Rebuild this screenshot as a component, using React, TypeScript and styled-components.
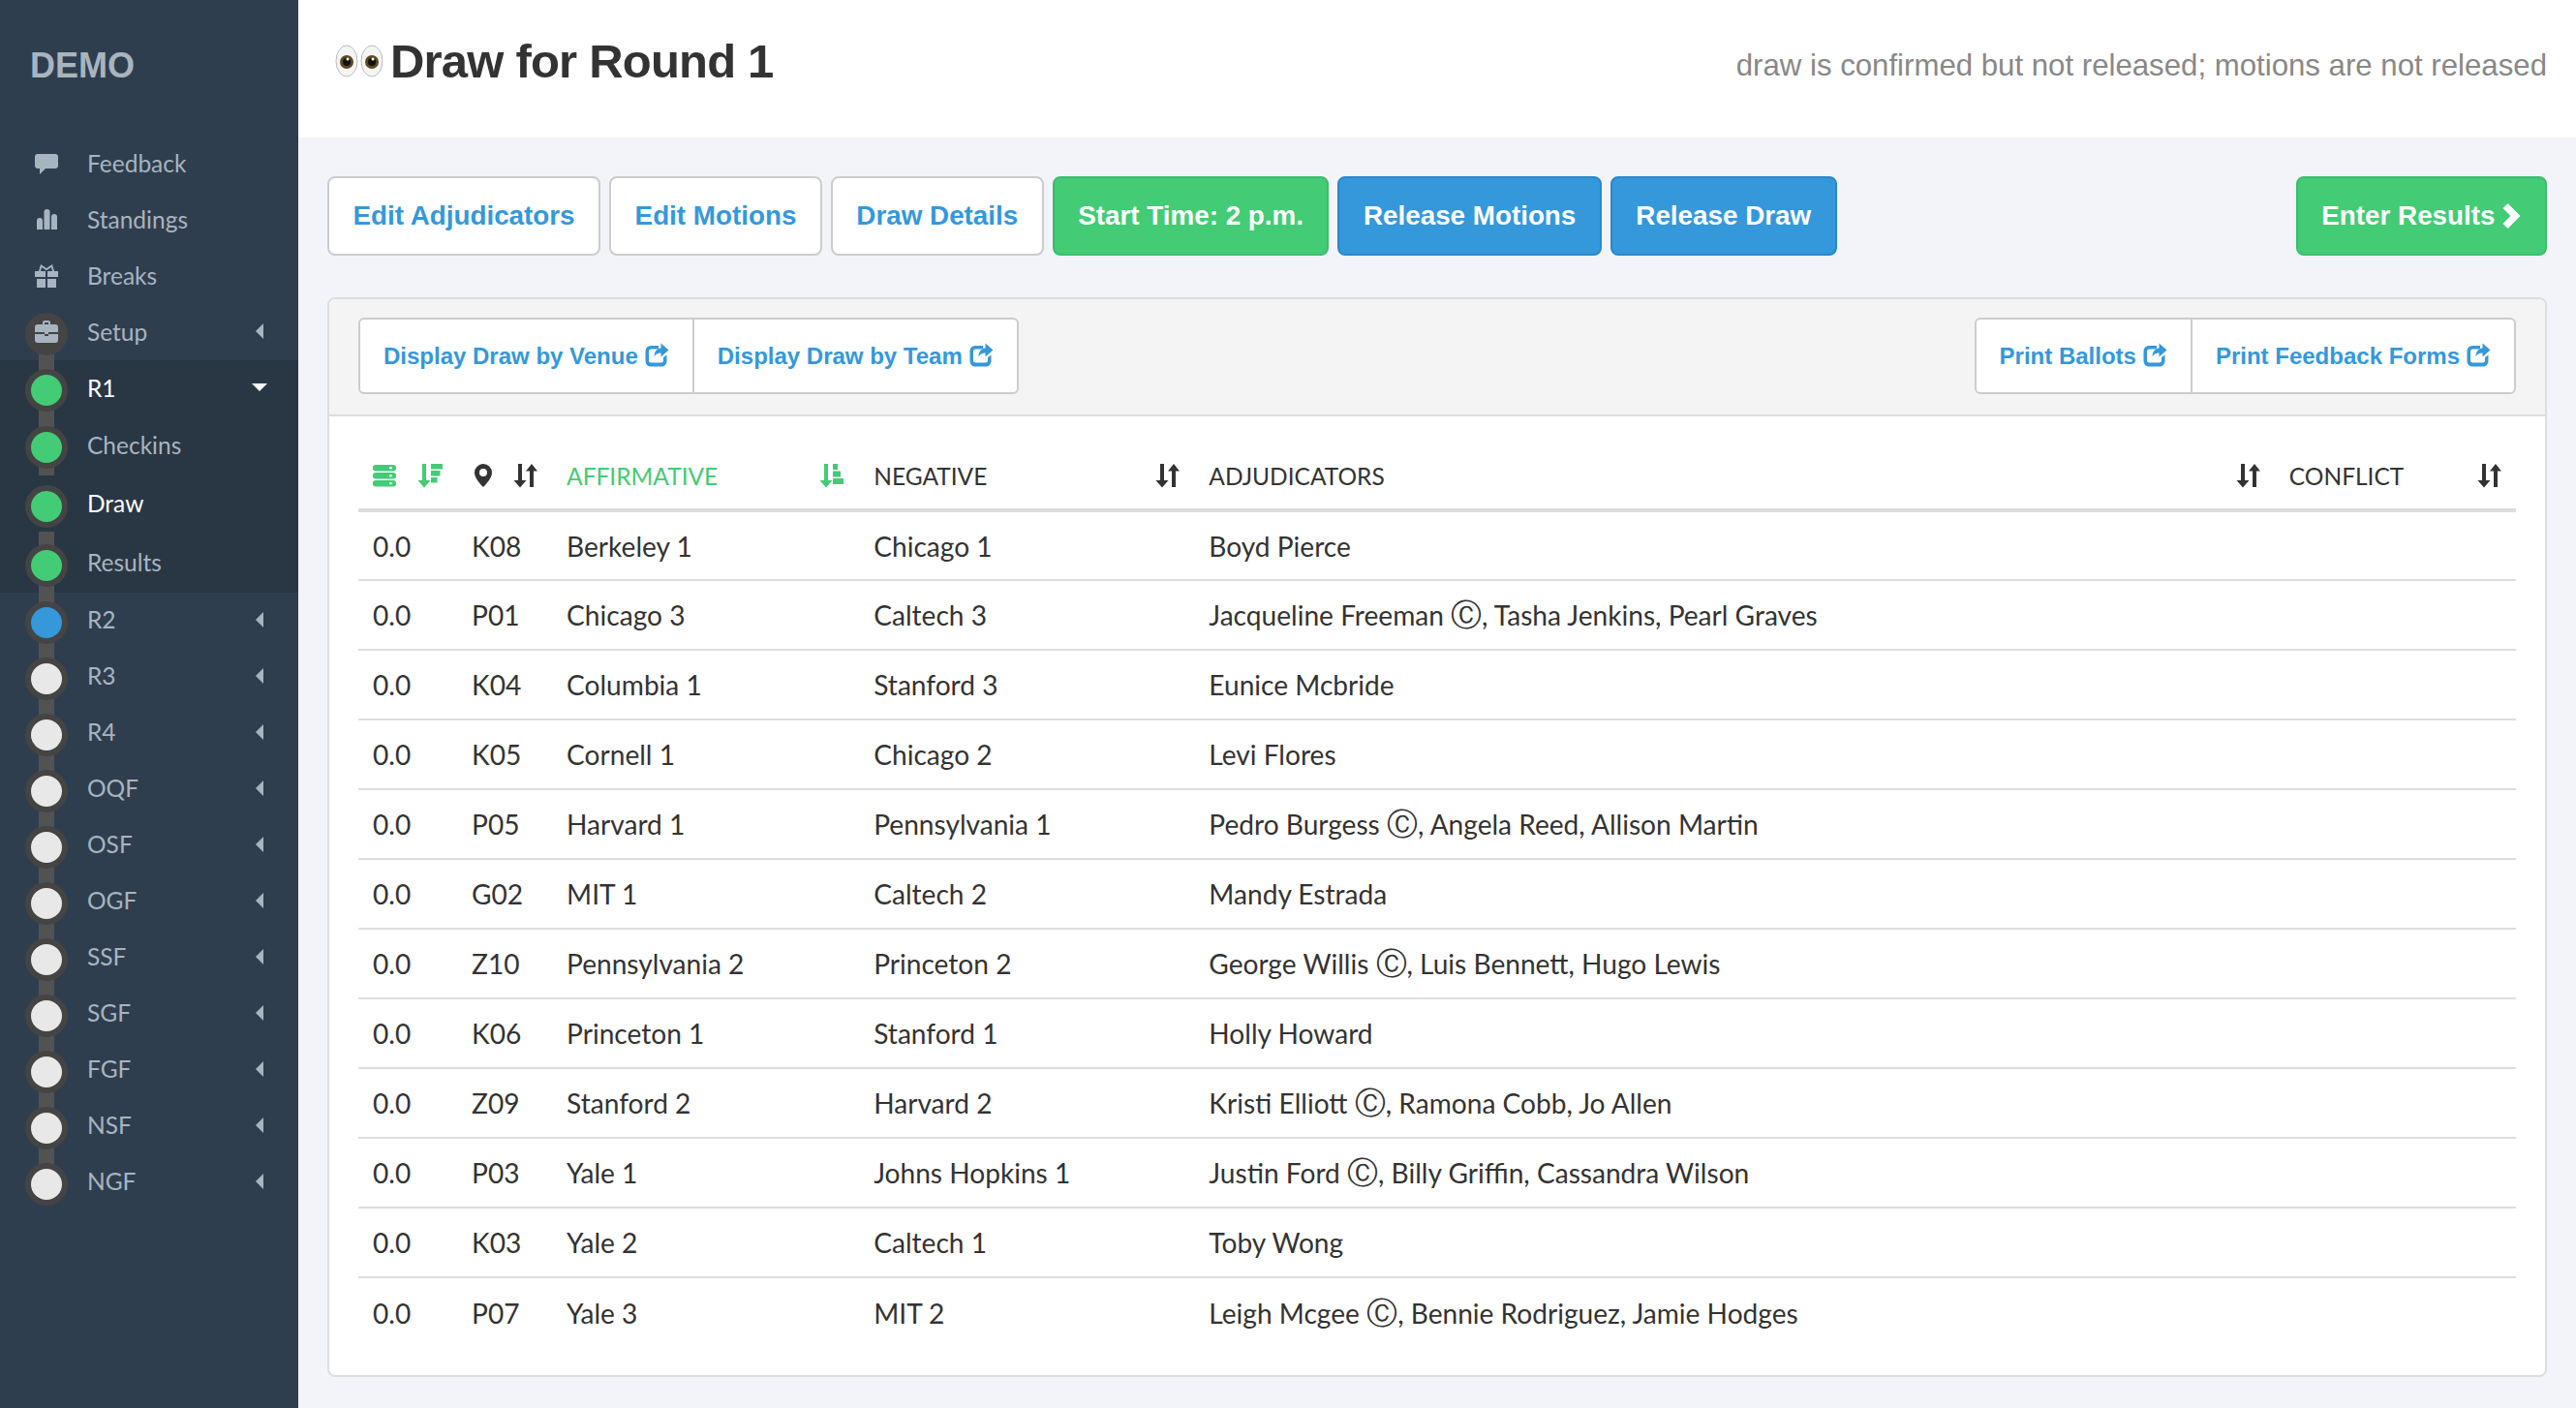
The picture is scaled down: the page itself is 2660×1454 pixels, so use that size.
import styled, { createGlobalStyle } from 'styled-components';

const GlobalStyle = createGlobalStyle`
  body {
    margin: 0;
    background: #f2f4f9;
    font-family: 'Lato', sans-serif;
    color: #333;
  }
`;

const Page = styled.div`
  display: grid;
  grid-template-columns: 308px 1fr;
  height: 1454px;
  overflow: hidden;
`;

const Sidebar = styled.nav`
  background: #2f3e4e;
`;

const Brand = styled.div`
  height: 140px;
  padding: 48px 0 0 31px;
  box-sizing: border-box;
  font: bold 36px/40px 'Liberation Sans', sans-serif;
  color: #a8b4c0;
`;

const NavRow = styled.div<{ $sub?: boolean; $dark?: boolean; $active?: boolean }>`
  position: relative;
  display: flex;
  align-items: center;
  box-sizing: border-box;
  height: ${(p) => (p.$sub ? 60.67 : 58)}px;
  padding: 0 36px 2px 90px;
  font-size: 24.5px;
  color: ${(p) => (p.$active ? '#fff' : '#a8b4c0')};
  background: ${(p) => (p.$dark ? '#293744' : 'transparent')};
`;

const NavLabel = styled.span`
  flex: 1;
`;

const NavIcon = styled.svg`
  position: absolute;
  left: 36px;
  top: 50%;
  margin-top: -13px;
  width: 24px;
  height: 26px;
  fill: #a8b4c0;
`;

const Connector = styled.i<{ $from: 'top' | 'dot'; $to: 'bottom' | 'dot' }>`
  position: absolute;
  left: 40px;
  width: 16px;
  top: ${(p) => (p.$from === 'top' ? '-2px' : '50%')};
  bottom: ${(p) => (p.$to === 'bottom' ? '0' : '50%')};
  background: #525252;
`;

const Dot = styled.span<{ $color: string }>`
  position: absolute;
  left: 26px;
  top: 50%;
  margin-top: -20px;
  width: 32px;
  height: 32px;
  border: 6px solid #444;
  border-radius: 50%;
  background: ${(p) => p.$color};
`;

const CaretLeft = styled.span`
  width: 0;
  height: 0;
  border-top: 8px solid transparent;
  border-bottom: 8px solid transparent;
  border-right: 8px solid #a8b4c0;
`;

const CaretDown = styled.span`
  width: 0;
  height: 0;
  margin-right: -4px;
  border-left: 8px solid transparent;
  border-right: 8px solid transparent;
  border-top: 8px solid #fff;
`;

const Main = styled.main`
  min-width: 0;
`;

const Header = styled.header`
  display: flex;
  align-items: center;
  justify-content: space-between;
  height: 142px;
  padding: 0 30px 0 38px;
  background: #fff;
`;

const Title = styled.h1`
  display: flex;
  align-items: center;
  margin: 0 0 16px;
  font: bold 49px/60px 'Liberation Sans', sans-serif;
  letter-spacing: -0.8px;
  color: #333;
`;

const Eyes = styled.svg`
  width: 52px;
  height: 34px;
  margin-right: 5px;
`;

const Status = styled.div`
  margin-bottom: 6px;
  font: 31.2px/40px 'Liberation Sans', sans-serif;
  color: #888;
`;

const Content = styled.div`
  padding: 40px 30px 0;
`;

const Toolbar = styled.div`
  display: flex;
  gap: 9px;
  margin-bottom: 43px;
`;

const variants = {
  white: { bg: '#fff', border: '#ccc', color: '#3498db' },
  green: { bg: '#43cb76', border: '#3cbd6c', color: '#fff' },
  blue: { bg: '#3498db', border: '#2a88ca', color: '#fff' },
};

const Button = styled.button<{ $variant: keyof typeof variants; $push?: boolean }>`
  display: flex;
  align-items: center;
  height: 82px;
  padding: 0 24.5px;
  margin-left: ${(p) => (p.$push ? 'auto' : '0')};
  box-sizing: border-box;
  border: 2px solid ${(p) => variants[p.$variant].border};
  border-radius: 8px;
  background: ${(p) => variants[p.$variant].bg};
  color: ${(p) => variants[p.$variant].color};
  font: bold 27.8px/34px 'Liberation Sans', sans-serif;
  white-space: nowrap;
`;

const Panel = styled.section`
  height: 1115px;
  box-sizing: border-box;
  border: 2px solid #ddd;
  border-radius: 8px;
  background: #fff;
  overflow: hidden;
`;

const PanelHeading = styled.div`
  display: flex;
  justify-content: space-between;
  align-items: center;
  height: 121px;
  padding: 0 30px 2px 30px;
  box-sizing: border-box;
  background: #f4f4f5;
  border-bottom: 2px solid #ddd;
`;

const Group = styled.div`
  display: flex;
  height: 79px;
  box-sizing: border-box;
  border: 2px solid #ccc;
  border-radius: 6px;
  background: #fff;
`;

const GroupItem = styled.a`
  display: flex;
  align-items: center;
  gap: 7px;
  padding: 0 24px;
  color: #3498db;
  font: bold 24px/30px 'Liberation Sans', sans-serif;
  white-space: nowrap;

  & + & {
    border-left: 2px solid #ccc;
  }
`;

const ShareIcon = styled.svg`
  width: 25px;
  height: 25px;
  margin-top: -3px;
  fill: #3498db;
`;

const Chevron = styled.svg`
  width: 21px;
  height: 26px;
  margin-left: 6px;
  fill: #fff;
`;

const TableWrap = styled.div`
  padding: 25px 30px 0 30px;
`;

const Table = styled.table`
  width: 100%;
  table-layout: fixed;
  border-collapse: collapse;
`;

const Col = styled.col<{ $width: number }>`
  width: ${(p) => p.$width}px;
`;

const Th = styled.th<{ $active?: boolean }>`
  height: 72px;
  padding: 2px 15px 0;
  box-sizing: border-box;
  border-bottom: 4px solid #ddd;
  text-align: left;
  font-size: 24.5px;
  font-weight: 400;
  color: ${(p) => (p.$active ? '#43cb76' : '#333')};
`;

const ThInner = styled.div`
  display: flex;
  align-items: center;
  justify-content: space-between;
`;

const SortIcon = styled.svg`
  display: block;
  width: 26px;
  height: 26px;
  fill: currentColor;
`;

const HeadGlyph = styled.svg<{ $green?: boolean }>`
  display: block;
  width: 24px;
  height: 26px;
  fill: ${(p) => (p.$green ? '#43cb76' : '#333')};
`;

const Tr = styled.tr`
  & + & td {
    border-top: 2px solid #ddd;
  }
`;

const Td = styled.td`
  height: 72px;
  padding: 0 15px;
  box-sizing: border-box;
  font-size: 28.1px;
  line-height: 34px;
  color: #333;
  white-space: nowrap;
`;

const ChairMark = styled.span`
  font-size: 32px;
  line-height: 0;
`;

const rows = [
  ['K08', 'Berkeley 1', 'Chicago 1', 'Boyd Pierce'],
  ['P01', 'Chicago 3', 'Caltech 3', 'Jacqueline Freeman|, Tasha Jenkins, Pearl Graves'],
  ['K04', 'Columbia 1', 'Stanford 3', 'Eunice Mcbride'],
  ['K05', 'Cornell 1', 'Chicago 2', 'Levi Flores'],
  ['P05', 'Harvard 1', 'Pennsylvania 1', 'Pedro Burgess|, Angela Reed, Allison Martin'],
  ['G02', 'MIT 1', 'Caltech 2', 'Mandy Estrada'],
  ['Z10', 'Pennsylvania 2', 'Princeton 2', 'George Willis|, Luis Bennett, Hugo Lewis'],
  ['K06', 'Princeton 1', 'Stanford 1', 'Holly Howard'],
  ['Z09', 'Stanford 2', 'Harvard 2', 'Kristi Elliott|, Ramona Cobb, Jo Allen'],
  ['P03', 'Yale 1', 'Johns Hopkins 1', 'Justin Ford|, Billy Griffin, Cassandra Wilson'],
  ['K03', 'Yale 2', 'Caltech 1', 'Toby Wong'],
  ['P07', 'Yale 3', 'MIT 2', 'Leigh Mcgee|, Bennie Rodriguez, Jamie Hodges'],
];

const laterRounds = ['R3', 'R4', 'OQF', 'OSF', 'OGF', 'SSF', 'SGF', 'FGF', 'NSF'];

const Share = () => (
  <ShareIcon viewBox="0 0 25 25">
    <path d="M6 3h8v3.500H6.500A2.500 2.500 0 0 0 4 9v9a2.500 2.500 0 0 0 2.500 2.500h10A2.500 2.500 0 0 0 19 18v-3l3.500-2.500V19a5.500 5.500 0 0 1-5.500 5.500H6A5.500 5.500 0 0 1 .5 19V8.500A5.500 5.500 0 0 1 6 3z" />
    <path d="M16.500 .5l8 7-8 7v-4c-3.500 0-5.500 1-7 4 0-5 2.500-8.500 7-9z" />
  </ShareIcon>
);

const Sort = () => (
  <SortIcon viewBox="0 0 26 26">
    <path d="M6 1h4v17h4.500L8 25.500 1.500 18H6z" />
    <path d="M20 1l6 7.500h-4V25h-4V8.500h-4z" />
  </SortIcon>
);

const SortDesc = () => (
  <SortIcon viewBox="0 0 26 26">
    <path d="M5 1h4v17h4.500L7 25.500.500 18H5z" />
    <path d="M14 1h12v5.500H14zM14 8h9.500v5.500H14zM14 15h6.500v5.500H14z" />
  </SortIcon>
);

const SortAsc = () => (
  <SortIcon viewBox="0 0 26 26">
    <path d="M5 1h4v17h4.500L7 25.500.500 18H5z" />
    <path d="M14 1h5v6h-5zM14 8.500h8v6h-8zM14 16h11v6H14z" />
  </SortIcon>
);

const App = () => (
  <>
    <GlobalStyle />
    <Page>
      <Sidebar>
        <Brand>DEMO</Brand>
        <NavRow>
          <NavIcon viewBox="0 0 24 26">
            <path d="M3 4h18a3 3 0 0 1 3 2v11a3 3 0 0 1-3 2H11l-6 6v-6H3a3 3 0 0 1-3-2V6a3 3 0 0 1 3-2z" transform="translate(0 -1)" />
          </NavIcon>
          <NavLabel>Feedback</NavLabel>
        </NavRow>
        <NavRow>
          <NavIcon viewBox="0 0 24 26">
            <path d="M2 14a3 3 0 0 1 6 0v9H2zM9.500 5a3 3 0 0 1 6 0v18h-6zM17 10a3 3 0 0 1 6 0v13h-6z" />
          </NavIcon>
          <NavLabel>Standings</NavLabel>
        </NavRow>
        <NavRow>
          <NavIcon viewBox="0 0 24 26">
            <path d="M0 8h11v6H0zM13 8h11v6H13zM2 16h9v9H2zM13 16h9v9h-9z" />
            <path d="M4 8l2-7 6 4 6-4 2 7h-2l-1-4-5 3.200L7 4 6 8z" />
          </NavIcon>
          <NavLabel>Breaks</NavLabel>
        </NavRow>
        <NavRow>
          <Connector $from="dot" $to="bottom" />
          <Dot $color="#444" />
          <NavIcon viewBox="0 0 24 26">
            <path d="M8 5V3a2 2 0 0 1 2-2h4a2 2 0 0 1 2 2v2h5a3 3 0 0 1 3 3v5H14v2h-4v-2H0V8a3 3 0 0 1 3-3zm2 0h4V3h-4zM0 15h10v2h4v-2h10v6a3 3 0 0 1-3 3H3a3 3 0 0 1-3-3z" />
          </NavIcon>
          <NavLabel>Setup</NavLabel>
          <CaretLeft />
        </NavRow>
        <NavRow $dark $active>
          <Connector $from="top" $to="bottom" />
          <Dot $color="#43cb76" />
          <NavLabel>R1</NavLabel>
          <CaretDown />
        </NavRow>
        <NavRow $dark $sub>
          <Connector $from="top" $to="bottom" />
          <Dot $color="#43cb76" />
          <NavLabel>Checkins</NavLabel>
        </NavRow>
        <NavRow $dark $sub $active>
          <Dot $color="#43cb76" />
          <NavLabel>Draw</NavLabel>
        </NavRow>
        <NavRow $dark $sub>
          <Connector $from="top" $to="bottom" />
          <Dot $color="#43cb76" />
          <NavLabel>Results</NavLabel>
        </NavRow>
        <NavRow>
          <Connector $from="top" $to="bottom" />
          <Dot $color="#3498db" />
          <NavLabel>R2</NavLabel>
          <CaretLeft />
        </NavRow>
        {laterRounds.map((round) => (
          <NavRow key={round}>
            <Connector $from="top" $to="bottom" />
            <Dot $color="#e8e8e8" />
            <NavLabel>{round}</NavLabel>
            <CaretLeft />
          </NavRow>
        ))}
        <NavRow>
          <Connector $from="top" $to="dot" />
          <Dot $color="#e8e8e8" />
          <NavLabel>NGF</NavLabel>
          <CaretLeft />
        </NavRow>
      </Sidebar>
      <Main>
        <Header>
          <Title>
            <Eyes viewBox="0 0 52 34">
              <ellipse cx="12" cy="17" rx="11" ry="16" fill="#f4f4f4" stroke="#bbb" />
              <ellipse cx="38" cy="17" rx="11" ry="16" fill="#f4f4f4" stroke="#bbb" />
              <circle cx="12" cy="18" r="7" fill="#5b4a1e" />
              <circle cx="38" cy="18" r="7" fill="#5b4a1e" />
              <circle cx="12" cy="18" r="4" fill="#111" />
              <circle cx="38" cy="18" r="4" fill="#111" />
              <circle cx="13" cy="15" r="1.500" fill="#fff" />
              <circle cx="39" cy="15" r="1.500" fill="#fff" />
            </Eyes>
            Draw for Round 1
          </Title>
          <Status>draw is confirmed but not released; motions are not released</Status>
        </Header>
        <Content>
          <Toolbar>
            <Button $variant="white">Edit Adjudicators</Button>
            <Button $variant="white">Edit Motions</Button>
            <Button $variant="white">Draw Details</Button>
            <Button $variant="green">Start Time: 2 p.m.</Button>
            <Button $variant="blue">Release Motions</Button>
            <Button $variant="blue">Release Draw</Button>
            <Button $variant="green" $push>
              Enter Results
              <Chevron viewBox="0 0 20 26">
                <path d="M6 0l13 13L6 26l-5-5 8-8-8-8z" />
              </Chevron>
            </Button>
          </Toolbar>
          <Panel>
            <PanelHeading>
              <Group>
                <GroupItem>Display Draw by Venue <Share /></GroupItem>
                <GroupItem>Display Draw by Team <Share /></GroupItem>
              </Group>
              <Group>
                <GroupItem>Print Ballots <Share /></GroupItem>
                <GroupItem>Print Feedback Forms <Share /></GroupItem>
              </Group>
            </PanelHeading>
            <TableWrap>
              <Table>
                <colgroup>
                  <Col $width={102} />
                  <Col $width={98} />
                  <Col $width={317} />
                  <Col $width={346} />
                  <Col $width={1115} />
                  <Col $width={249} />
                </colgroup>
                <thead>
                  <tr>
                    <Th $active>
                      <ThInner>
                        <HeadGlyph $green viewBox="0 0 24 26">
                          <path
                            fillRule="evenodd"
                            d="M3 2h18a3 3 0 0 1 0 6.500H3a3 3 0 0 1 0-6.500zM3 10h18a3 3 0 0 1 0 6.500H3a3 3 0 0 1 0-6.500zM3 18h18a3 3 0 0 1 0 6.500H3a3 3 0 0 1 0-6.500zM17 4.200v2h3v-2zM17 12.200v2h3v-2zM17 20.200v2h3v-2z"
                          />
                        </HeadGlyph>
                        <SortDesc />
                      </ThInner>
                    </Th>
                    <Th>
                      <ThInner>
                        <HeadGlyph viewBox="0 0 24 26">
                          <path fillRule="evenodd" d="M12 1a9 9 0 0 1 9 9c0 5-5 11-9 15-4-4-9-10-9-15a9 9 0 0 1 9-9zm0 5a4 4 0 1 0 0 8 4 4 0 0 0 0-8z" />
                        </HeadGlyph>
                        <Sort />
                      </ThInner>
                    </Th>
                    <Th $active>
                      <ThInner>
                        AFFIRMATIVE
                        <SortAsc />
                      </ThInner>
                    </Th>
                    <Th>
                      <ThInner>
                        NEGATIVE
                        <Sort />
                      </ThInner>
                    </Th>
                    <Th>
                      <ThInner>
                        ADJUDICATORS
                        <Sort />
                      </ThInner>
                    </Th>
                    <Th>
                      <ThInner>
                        CONFLICT
                        <Sort />
                      </ThInner>
                    </Th>
                  </tr>
                </thead>
                <tbody>
                  {rows.map(([venue, aff, neg, adj]) => {
                    const [chair, panel] = adj.split('|');
                    return (
                      <Tr key={venue}>
                        <Td>0.0</Td>
                        <Td>{venue}</Td>
                        <Td>{aff}</Td>
                        <Td>{neg}</Td>
                        <Td>
                          {chair}
                          {panel !== undefined && (
                            <>
                              {' '}
                              <ChairMark>Ⓒ</ChairMark>
                              {panel}
                            </>
                          )}
                        </Td>
                        <Td />
                      </Tr>
                    );
                  })}
                </tbody>
              </Table>
            </TableWrap>
          </Panel>
        </Content>
      </Main>
    </Page>
  </>
);

export default App;
